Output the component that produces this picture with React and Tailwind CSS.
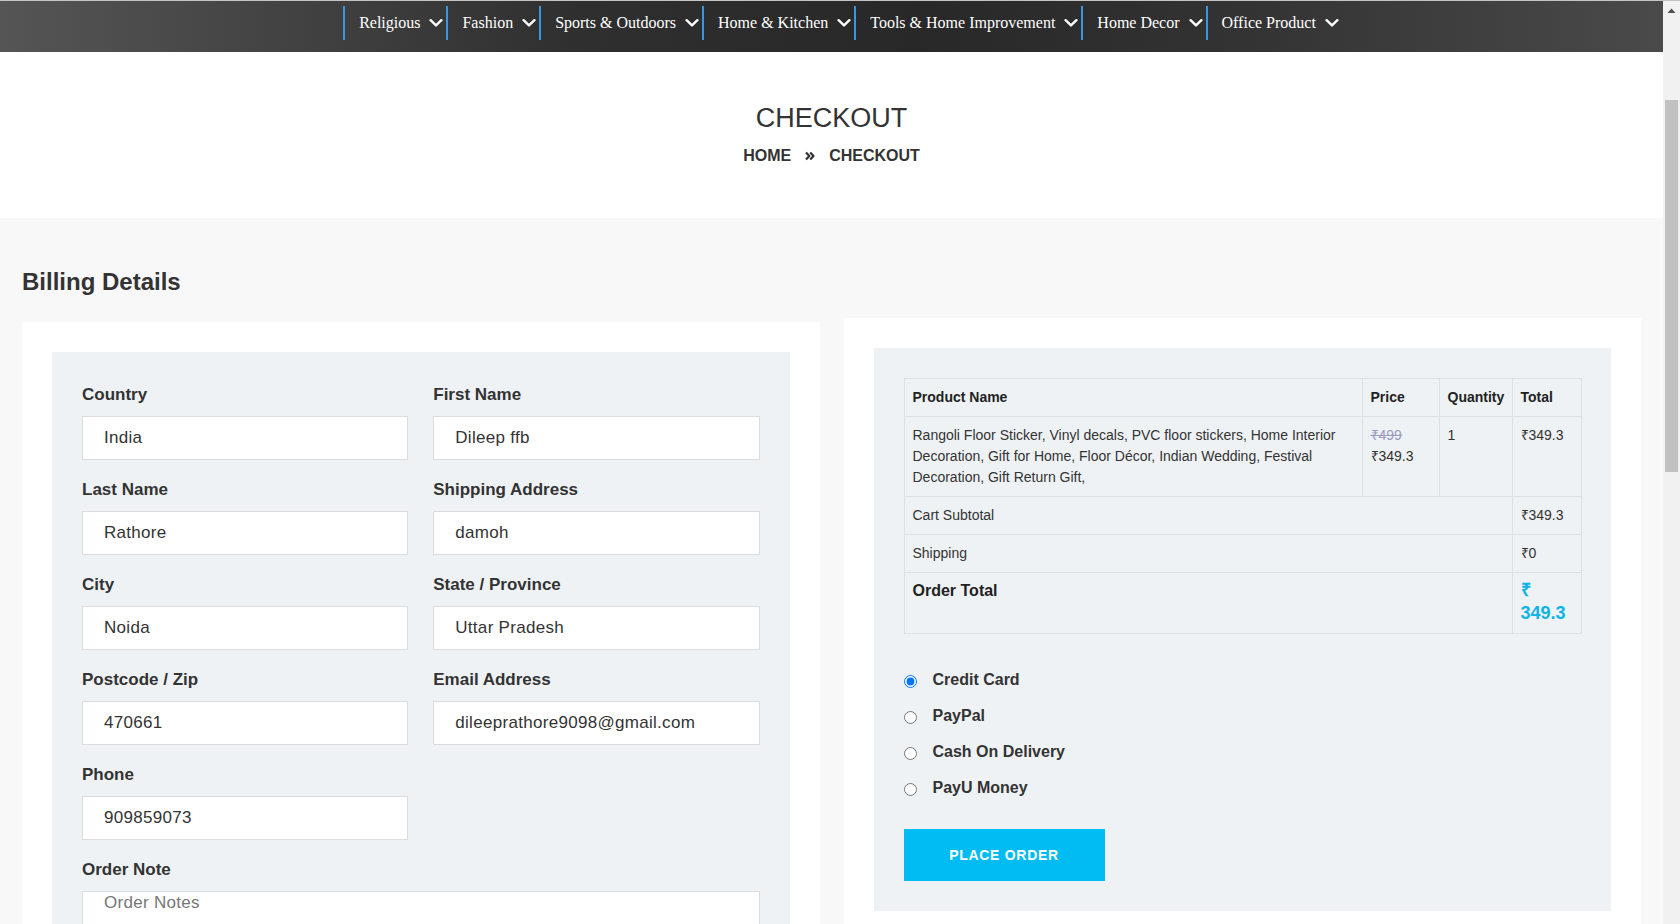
import React from "react";

const navItems = [
  "Religious",
  "Fashion",
  "Sports & Outdoors",
  "Home & Kitchen",
  "Tools & Home Improvement",
  "Home Decor",
  "Office Product",
];

function Chevron() {
  return (
    <svg width="14" height="10" viewBox="0 0 14 10" fill="none">
      <path d="M1.6 2.2 L7 7.4 L12.4 2.2" stroke="white" strokeWidth="2.4" strokeLinecap="round" strokeLinejoin="round" />
    </svg>
  );
}

function DoubleAngle() {
  return (
    <svg width="10" height="10" viewBox="0 0 10 10" fill="none">
      <path d="M1 1.5 L4.3 5 L1 8.5" stroke="#333" strokeWidth="2.2" strokeLinejoin="round" />
      <path d="M5.2 1.5 L8.5 5 L5.2 8.5" stroke="#333" strokeWidth="2.2" strokeLinejoin="round" />
    </svg>
  );
}

function Field({ label, value }) {
  return (
    <div className="mb-[19px]">
      <div className="text-[17px] font-bold leading-[22px] text-[#333] mb-[10px]">{label}</div>
      <div className="h-[44px] bg-white border border-[#dcdcdc] pl-[21px] flex items-center text-[17px] tracking-[0.3px] text-[#333]">
        {value}
      </div>
    </div>
  );
}

export default function App() {
  const cell = "border border-[#dde1e6] px-[8px]";
  return (
    <div className="h-[924px] overflow-hidden flex flex-col font-['Liberation_Sans',Arial,sans-serif] bg-white">
      <div className="h-[1px] bg-[#c4c4c4] shrink-0" />
      <div className="flex flex-1 min-h-0">
        <div className="w-[1663px] shrink-0 overflow-hidden">
          {/* NAV */}
          <nav className="h-[51px] bg-[linear-gradient(to_right,#555555,#2f2f2f_35%,#282828_55%,#333333_75%,#4a4a4a)] flex justify-center pl-[22px]">
            <div className="flex mt-[5px] h-[34px]">
              {navItems.map((t) => (
                <div key={t} className="flex items-center gap-[9px] h-[34px] pl-[14px] pr-[3px] border-l-2 border-[#3d95dd]">
                  <span className="font-['Liberation_Serif',serif] text-[16px] text-white whitespace-nowrap">{t}</span>
                  <Chevron />
                </div>
              ))}
            </div>
          </nav>

          {/* HEADER */}
          <div className="bg-white flex flex-col items-center pt-[50px] pb-[52px]">
            <h1 className="text-[27px] leading-[32px] text-[#333]">CHECKOUT</h1>
            <div className="mt-[12px] flex items-center text-[16px] font-bold leading-[20px] text-[#333]">
              <span>HOME</span>
              <span className="mx-[14px] flex items-center"><DoubleAngle /></span>
              <span>CHECKOUT</span>
            </div>
          </div>

          {/* BODY */}
          <div className="bg-[#f8f8f8] pl-[22px] pr-[22px] pt-[50px] grid grid-cols-2 gap-x-[24px] items-start">
            {/* LEFT */}
            <div>
              <h2 className="text-[24px] font-bold leading-[28px] text-[#333] mb-[26px]">Billing Details</h2>
              <div className="bg-white p-[30px]">
                <div className="bg-[#eff2f5] px-[30px] pt-[32px] pb-[30px]">
                  <div className="grid grid-cols-2 gap-x-[25px]">
                    <Field label="Country" value="India" />
                    <Field label="First Name" value="Dileep ffb" />
                    <Field label="Last Name" value="Rathore" />
                    <Field label="Shipping Address" value="damoh" />
                    <Field label="City" value="Noida" />
                    <Field label="State / Province" value="Uttar Pradesh" />
                    <Field label="Postcode / Zip" value="470661" />
                    <Field label="Email Address" value="dileeprathore9098@gmail.com" />
                    <Field label="Phone" value="909859073" />
                  </div>
                  <div>
                    <div className="text-[17px] font-bold leading-[22px] text-[#333] mb-[10px]">Order Note</div>
                    <div className="h-[110px] bg-white border border-[#dcdcdc] pl-[21px] pt-0 leading-[22px] text-[17px] tracking-[0.3px] text-[#777]">
                      Order Notes
                    </div>
                  </div>
                </div>
              </div>
            </div>

            {/* RIGHT */}
            <div className="mt-[50px] bg-white p-[30px]">
              <div className="bg-[#eff2f5] p-[30px]">
                <table className="w-[677px] table-fixed border-collapse text-[14px] text-[#333]">
                  <colgroup>
                    <col className="w-[458px]" />
                    <col className="w-[77px]" />
                    <col className="w-[73px]" />
                    <col className="w-[69px]" />
                  </colgroup>
                  <thead>
                    <tr className="text-left text-[#222]">
                      <th className={`${cell} py-[8px] leading-[21px] font-bold whitespace-nowrap`}>Product Name</th>
                      <th className={`${cell} py-[8px] leading-[21px] font-bold whitespace-nowrap`}>Price</th>
                      <th className={`${cell} py-[8px] leading-[21px] font-bold whitespace-nowrap`}>Quantity</th>
                      <th className={`${cell} py-[8px] leading-[21px] font-bold whitespace-nowrap`}>Total</th>
                    </tr>
                  </thead>
                  <tbody>
                    <tr className="align-top">
                      <td className={`${cell} pt-[8px] pb-[8px] leading-[21px]`}>
                        Rangoli Floor Sticker, Vinyl decals, PVC floor stickers, Home Interior Decoration, Gift for Home, Floor Décor, Indian Wedding, Festival Decoration, Gift Return Gift,
                      </td>
                      <td className={`${cell} pt-[8px] leading-[21px]`}>
                        <div className="line-through text-[#9b9bbd]">₹499</div>
                        <div>₹349.3</div>
                      </td>
                      <td className={`${cell} pt-[8px] leading-[21px]`}>1</td>
                      <td className={`${cell} pt-[8px] leading-[21px]`}>₹349.3</td>
                    </tr>
                    <tr>
                      <td colSpan={3} className={`${cell} py-[8px] leading-[21px]`}>Cart Subtotal</td>
                      <td className={`${cell} py-[8px] leading-[21px]`}>₹349.3</td>
                    </tr>
                    <tr>
                      <td colSpan={3} className={`${cell} py-[8px] leading-[21px]`}>Shipping</td>
                      <td className={`${cell} py-[8px] leading-[21px]`}>₹0</td>
                    </tr>
                    <tr className="align-top">
                      <td colSpan={3} className={`${cell} pt-[7px] pb-[8px] text-[16px] font-bold leading-[22px] text-[#222]`}>Order Total</td>
                      <td className={`${cell} pt-[6px] pb-[8px] text-[18px] font-bold leading-[23px] text-[#0db4ea]`}>
                        <div>₹</div>
                        <div>349.3</div>
                      </td>
                    </tr>
                  </tbody>
                </table>

                <div className="mt-[36px] flex flex-col gap-[16px]">
                  {["Credit Card", "PayPal", "Cash On Delivery", "PayU Money"].map((p, i) => (
                    <label key={p} className="flex items-start gap-[16px]">
                      <input type="radio" name="pay" defaultChecked={i === 0} className="m-0 mt-[5px] w-[13px] h-[13px]" />
                      <span className="text-[16px] font-bold leading-[20px] text-[#333]">{p}</span>
                    </label>
                  ))}
                </div>

                <button className="mt-[31px] w-[201px] h-[52px] bg-[#00bcf2] text-white font-bold text-[14px] tracking-[0.7px]">
                  PLACE ORDER
                </button>
              </div>
            </div>
          </div>
        </div>

        {/* fake scrollbar */}
        <div className="w-[17px] shrink-0 bg-[#f1f1f1] relative">
          <svg className="absolute left-[4px] top-[7px]" width="9" height="6" viewBox="0 0 9 6">
            <path d="M4.5 0.5 L8.5 5 L0.5 5 Z" fill="#505050" />
          </svg>
          <div className="absolute left-[2px] top-[99px] w-[13px] h-[372px] bg-[#c1c1c1]" />
        </div>
      </div>
    </div>
  );
}
